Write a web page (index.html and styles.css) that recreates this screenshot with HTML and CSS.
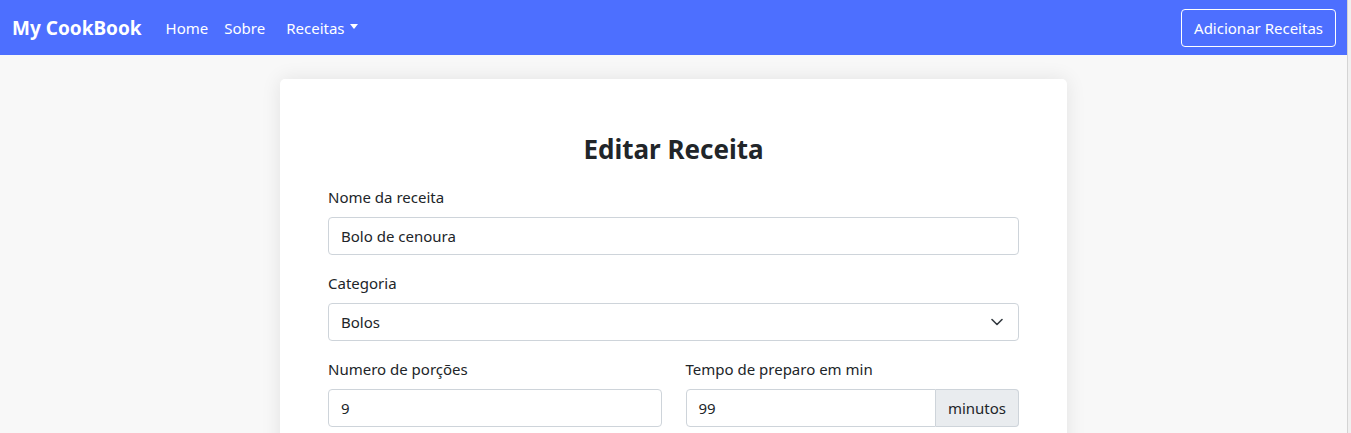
FILE: index.html
```html
<!DOCTYPE html>
<html lang="pt">
<head>
<meta charset="utf-8">
<title>My CookBook</title>
<link rel="stylesheet" href="styles.css">
</head>
<body>
<div class="page">
  <div class="main">
    <nav class="navbar">
      <a class="brand" href="#">My CookBook</a>
      <ul class="nav">
        <li><a href="#">Home</a></li>
        <li><a href="#">Sobre</a></li>
        <li class="dropdown"><a href="#">Receitas<span class="caret"></span></a></li>
      </ul>
      <a class="btn-outline" href="#">Adicionar Receitas</a>
    </nav>
    <div class="content">
      <div class="card">
        <h1 class="title">Editar Receita</h1>
        <div class="field">
          <label class="label">Nome da receita</label>
          <div class="input">Bolo de cenoura</div>
        </div>
        <div class="field">
          <label class="label">Categoria</label>
          <div class="input select">
            <span>Bolos</span>
            <svg class="chev" width="12" height="8" viewBox="0 0 12 8"><path d="M1 1.5l5 5 5-5" fill="none" stroke="#343a40" stroke-width="1.6" stroke-linecap="round" stroke-linejoin="round"/></svg>
          </div>
        </div>
        <div class="row">
          <div class="field">
            <label class="label">Numero de porções</label>
            <div class="input">9</div>
          </div>
          <div class="field">
            <label class="label">Tempo de preparo em min</label>
            <div class="group">
              <div class="input grow">99</div>
              <div class="addon">minutos</div>
            </div>
          </div>
        </div>
      </div>
    </div>
  </div>
  <div class="scrollbar"></div>
</div>
</body>
</html>
```

FILE: styles.css
```css
* { box-sizing: border-box; }
html, body { margin: 0; padding: 0; height: 100%; overflow: hidden; }
body {
  font-family: "Noto Sans", "Open Sans", sans-serif;
  font-size: 15px;
  color: #212529;
  background: #f8f8f8;
}
.page { display: flex; height: 100%; }
.main { flex: 1; min-width: 0; }
.scrollbar { width: 4px; border-left: 1px solid #d4d4d4; background: #f0f0f0; }
.navbar {
  height: 55px;
  background: #4d6fff;
  display: flex;
  align-items: center;
  padding: 0 11px 0 12px;
}
.brand {
  color: #fff;
  font-weight: 700;
  font-size: 19px;
  text-decoration: none;
  margin-right: 16px;
}
.nav { list-style: none; margin: 0; padding: 0; display: flex; flex: 1; }
.nav a {
  color: #fff;
  text-decoration: none;
  font-size: 15px;
  padding: 0 8px;
  display: flex;
  align-items: center;
}
.nav .dropdown a { padding-left: 13px; }
.caret {
  display: inline-block;
  margin-left: 5px;
  border-top: 5px solid #fff;
  border-left: 4.5px solid transparent;
  border-right: 4.5px solid transparent;
  margin-top: -3px;
}
.btn-outline {
  color: #fff;
  border: 1px solid #fff;
  border-radius: 4px;
  padding: 0 12px;
  height: 38px;
  display: flex;
  align-items: center;
  font-size: 15px;
  text-decoration: none;
}
.content { display: flex; justify-content: center; padding-top: 24px; }
.card {
  width: 787px;
  background: #fff;
  border-radius: 5px;
  box-shadow: 0 0 20px rgba(0,0,0,0.09);
  padding: 53px 48px 24px;
}
.title {
  margin: 0 0 19px;
  text-align: center;
  font-size: 26px;
  font-weight: 700;
  line-height: 34px;
}
.field { margin-bottom: 16px; }
.label { display: block; font-size: 15px; margin-bottom: 8px; line-height: 24px; }
.input {
  height: 38px;
  border: 1px solid #ced4da;
  border-radius: 4px;
  padding: 0 12px;
  display: flex;
  align-items: center;
  font-size: 15px;
  background: #fff;
}
.select { justify-content: space-between; padding-right: 15px; }
.row { display: grid; grid-template-columns: 1fr 1fr; column-gap: 24px; }
.group { display: flex; }
.grow { flex: 1; border-radius: 4px 0 0 4px; }
.addon {
  height: 38px;
  background: #e9ecef;
  border: 1px solid #ced4da;
  border-left: 0;
  border-radius: 0 4px 4px 0;
  padding: 0 12px;
  display: flex;
  align-items: center;
  font-size: 15px;
}
```
